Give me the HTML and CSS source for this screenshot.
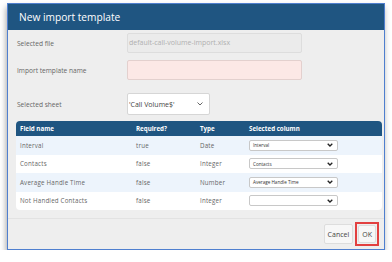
FILE: index.html
```html
<!DOCTYPE html>
<html lang="en">
<head>
    <meta charset="UTF-8">
    <meta name="viewport" content="width=device-width, initial-scale=1.0">
    <link rel="stylesheet" href="styles.css">
</head>
<body>
    <div class="dialog">
        <div class="dialog-header">New import template</div>
        <div class="dialog-body">
            <div class="form-row row-file">
                <label>Selected file</label>
                <div class="field disabled">default-call-volume-import.xlsx</div>
            </div>
            <div class="form-row row-name">
                <label>Import template name</label>
                <div class="field invalid"></div>
            </div>
            <div class="form-row row-sheet">
                <label>Selected sheet</label>
                <div class="sheet-select">
                    <span>'Call Volume$'</span>
                    <svg width="6" height="4" viewBox="0 0 6 4"><path d="M0.5 0.5 L3 3 L5.5 0.5" fill="none" stroke="#666" stroke-width="1"/></svg>
                </div>
            </div>

            <div class="mapping">
                <div class="mapping-row head">
                    <div>Field name</div>
                    <div>Required?</div>
                    <div>Type</div>
                    <div>Selected column</div>
                </div>
                <div class="mapping-row alt">
                    <div>Interval</div>
                    <div>true</div>
                    <div>Date</div>
                    <div><div class="mini-select"><span>Interval</span><svg width="6" height="4" viewBox="0 0 6 4"><path d="M0.7 0.7 L3 3 L5.3 0.7" fill="none" stroke="#222" stroke-width="1.3"/></svg></div></div>
                </div>
                <div class="mapping-row">
                    <div>Contacts</div>
                    <div>false</div>
                    <div>Integer</div>
                    <div><div class="mini-select"><span>Contacts</span><svg width="6" height="4" viewBox="0 0 6 4"><path d="M0.7 0.7 L3 3 L5.3 0.7" fill="none" stroke="#222" stroke-width="1.3"/></svg></div></div>
                </div>
                <div class="mapping-row alt">
                    <div>Average Handle Time</div>
                    <div>false</div>
                    <div>Number</div>
                    <div><div class="mini-select"><span>Average Handle Time</span><svg width="6" height="4" viewBox="0 0 6 4"><path d="M0.7 0.7 L3 3 L5.3 0.7" fill="none" stroke="#222" stroke-width="1.3"/></svg></div></div>
                </div>
                <div class="mapping-row">
                    <div>Not Handled Contacts</div>
                    <div>false</div>
                    <div>Integer</div>
                    <div><div class="mini-select"><span></span><svg width="6" height="4" viewBox="0 0 6 4"><path d="M0.7 0.7 L3 3 L5.3 0.7" fill="none" stroke="#222" stroke-width="1.3"/></svg></div></div>
                </div>
            </div>
        </div>
        <div class="dialog-footer">
            <button class="btn">Cancel</button>
            <div class="highlight"><button class="btn">OK</button></div>
        </div>
    </div>
</body>
</html>
```

FILE: styles.css
```css
body {
    margin: 0;
    background: #ffffff;
    font-family: "Open Sans", "Liberation Sans", sans-serif;
}

.dialog {
    margin: 3px 0 0 7px;
    width: 376px;
    height: 245px;
    border: 1px solid #4f7fcf;
    background: #eeeeee;
    box-shadow: -1px 4px 6px rgba(0, 0, 0, 0.35);
    display: flex;
    flex-direction: column;
}

.dialog-header {
    height: 26px;
    background: #1f5581;
    color: #ffffff;
    font-size: 10.2px;
    line-height: 26px;
    padding-left: 11px;
}

.dialog-body {
    flex: 1;
    padding: 3px 2px 0 8px;
}

.form-row {
    display: flex;
    align-items: center;
}

.form-row label {
    width: 110px;
    padding-left: 1px;
    font-size: 6.6px;
    color: #666666;
}

.row-name {
    margin-top: 7px;
}

.row-sheet {
    margin-top: 13px;
}

.field {
    width: 172px;
    height: 18px;
    border: 1px solid #dddddd;
    border-radius: 2px;
    font-size: 7px;
    line-height: 18px;
    padding-left: 1px;
}

.field.disabled {
    background: #ebebeb;
    color: #b0b0b0;
}

.field.invalid {
    background: #fce8e6;
    border-color: #e3d0ce;
}

.sheet-select {
    width: 74px;
    height: 20px;
    border: 1px solid #d6d6d6;
    border-radius: 2px;
    background: #ffffff;
    display: flex;
    align-items: center;
    justify-content: space-between;
    padding: 0 6px 0 1px;
    font-size: 7px;
    color: #444444;
}

.mapping {
    margin-top: 6px;
    background: #ffffff;
    border-radius: 4px;
    overflow: hidden;
}

.mapping-row {
    display: grid;
    grid-template-columns: 116px 64px 49px 1fr;
    align-items: center;
    height: 18.5px;
    padding-left: 4px;
    font-size: 6.2px;
    color: #666666;
    letter-spacing: 0.2px;
}

.mapping-row.head {
    height: 15px;
    background: #1f5581;
    color: #ffffff;
    font-weight: bold;
    letter-spacing: 0;
}

.mapping-row.alt {
    background: #edf4fc;
}

.mini-select {
    width: 80px;
    height: 9px;
    border: 1px solid #c8c8c8;
    border-radius: 2px;
    background: #ffffff;
    display: flex;
    align-items: center;
    justify-content: space-between;
    padding: 0 4px 0 3px;
    font-size: 4.6px;
    color: #333333;
    letter-spacing: 0;
}

.dialog-footer {
    height: 30px;
    border-top: 1px solid #e2e2e2;
    display: flex;
    align-items: center;
    justify-content: flex-end;
    padding-right: 5px;
    gap: 2px;
}

.btn {
    font-family: "Open Sans", "Liberation Sans", sans-serif;
    font-size: 7px;
    color: #444444;
    background: #f7f7f7;
    border: 1px solid #dddddd;
    border-radius: 2px;
    height: 20px;
    padding: 0 3px;
}

.highlight {
    display: flex;
    border: 2px solid #e24040;
    padding: 1px;
}

.highlight .btn {
    height: 18px;
    padding: 0 3px;
}
```
